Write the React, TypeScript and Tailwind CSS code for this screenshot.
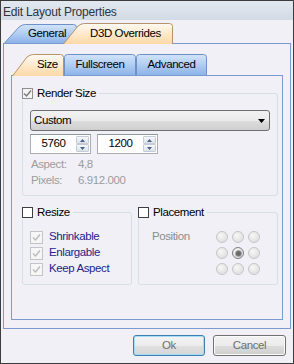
import React, { useId } from "react";

type TabProps = {
  label: string;
  w: number;
  h: number;
  selected?: boolean;
  slant?: boolean;
  className?: string;
  textClass?: string;
};

// Office-2007 style tab, shape drawn behind the label
const Tab = ({ label, w, h, selected, slant, className = "", textClass = "justify-center" }: TabProps) => {
  const id = useId();
  const s = 18;
  const d = slant
    ? `M0.5 ${h} L${s - 3} 3 Q${s} 0.5 ${s + 3.5} 0.5 H${w - 3.5} Q${w - 0.5} 0.5 ${w - 0.5} 3.5 V${h}`
    : `M0.5 ${h} V3.5 Q0.5 0.5 3.5 0.5 H${w - 3.5} Q${w - 0.5} 0.5 ${w - 0.5} 3.5 V${h}`;
  return (
    <div className={`relative shrink-0 flex items-center ${selected ? "z-20" : "z-10"} ${className}`}>
      <svg className="absolute inset-0" width={w} height={h}>
        <defs>
          <linearGradient id={id} x1="0" y1="0" x2="0" y2="1">
            {selected ? (
              <>
                <stop offset="0" stopColor="#fffaf3" />
                <stop offset="1" stopColor="#fdd8a6" />
              </>
            ) : (
              <>
                <stop offset="0" stopColor="#d3e4fa" />
                <stop offset="0.5" stopColor="#b0cdf2" />
                <stop offset="1" stopColor="#8db3ea" />
              </>
            )}
          </linearGradient>
        </defs>
        <path d={d + " Z"} fill={`url(#${id})`} stroke="none" />
        <path d={d} fill="none" stroke={selected ? "#b8926a" : "#6f91c7"} />
      </svg>
      <span className={`relative flex w-full pt-[1px] ${textClass}`}>{label}</span>
    </div>
  );
};

const Check = ({ checked, tone }: { checked?: boolean; tone: "dark" | "grey" | "off" }) => {
  const box =
    tone === "dark"
      ? "w-[11px] h-[11px] border-[#3f3f3f] bg-white"
      : tone === "grey"
      ? "w-[11px] h-[11px] border-[#8e8f8f] bg-[#f4f4f4]"
      : "w-[13px] h-[13px] border-[#c4c4c4] bg-[#f6f6f6]";
  const mark = tone === "grey" ? "#7d7d7d" : "#bdbdbd";
  return (
    <span className={`shrink-0 border flex items-center justify-center ${box}`}>
      {checked && (
        <svg width="9" height="9" viewBox="0 0 9 9">
          <path d="M1 4.5 L3.5 7 L8 1.5" fill="none" stroke={mark} strokeWidth="1.5" />
        </svg>
      )}
    </span>
  );
};

const SpinBtn = ({ up }: { up?: boolean }) => (
  <span className="w-[13px] h-[8px] border border-[#c5ccd6] rounded-[1px] bg-[linear-gradient(#f5f7fa,#dde3eb)] flex items-center justify-center">
    <svg width="5" height="3" viewBox="0 0 5 3">
      <path d={up ? "M0 3 L2.5 0 L5 3 Z" : "M0 0 L5 0 L2.5 3 Z"} fill="#4a5f8a" />
    </svg>
  </span>
);

const Spinner = ({ value }: { value: string }) => (
  <div className="w-[61px] h-[20px] bg-white border border-[#abadb3] border-t-[#8f939b] flex items-center">
    <span className="flex-1 text-center">{value}</span>
    <div className="flex flex-col mr-[1px]">
      <SpinBtn up />
      <SpinBtn />
    </div>
  </div>
);

const Radio = ({ on }: { on?: boolean }) => (
  <div className="w-[16px] h-[16px] flex items-center justify-center">
    <span
      className={`w-[12px] h-[12px] rounded-full border bg-[radial-gradient(circle_at_40%_35%,#f7f7f7,#d8d8d8)] flex items-center justify-center ${
        on ? "border-[#7e7e7e]" : "border-[#c6c6c6]"
      }`}
    >
      {on && <span className="w-[5px] h-[5px] rounded-full bg-[#6a6a6a] ring-1 ring-[#a8a8a8]" />}
    </span>
  </div>
);

const Legend = ({ label, checked, tone }: { label: string; checked?: boolean; tone: "dark" | "grey" }) => (
  <legend className="-ml-[8px] pr-[3px]">
    <span className="flex items-center h-[13px]">
      <Check checked={checked} tone={tone} />
      <span className="ml-[4px]">{label}</span>
    </span>
  </legend>
);

export default function App() {
  return (
    <div className="w-[294px] h-[364px] border border-[#3c3c3c] bg-[#f0f0f6] flex flex-col font-['Liberation_Sans',Arial,sans-serif] text-[11.5px] tracking-[-0.4px] text-black select-none">
      {/* title bar */}
      <div className="h-[19px] shrink-0 pl-[2px] flex items-center pt-[2px] text-[12px] tracking-[-0.2px] text-[#2e343c] bg-[linear-gradient(#e2e8ef,#d2dbe5)]">
        Edit Layout Properties
      </div>

      <div className="px-[2px] pt-[3px]">
        {/* outer tabs */}
        <div className="flex items-start h-[20px] pl-[1px]">
          <Tab label="General" w={73} h={19} slant className="w-[73px] h-[19px] mt-[1px]" textClass="pl-[24px]" />
          <Tab label="D3D Overrides" w={110} h={21} slant selected className="w-[110px] h-[21px] -ml-[14px]" textClass="pl-[27px] pb-[1px]" />
        </div>

        {/* outer panel */}
        <div className="h-[286px] border border-[#7b9bd0] pt-[10px] px-[7px] pb-[8px] flex flex-col">
          <div className="flex items-start h-[21px]">
            <Tab label="Size" w={52} h={22} slant selected className="w-[52px] h-[22px] ml-[1px]" textClass="pl-[25px] pb-[1px]" />
            <Tab label="Fullscreen" w={72} h={21} className="w-[72px] h-[21px]" />
            <Tab label="Advanced" w={71} h={21} className="w-[71px] h-[21px]" />
          </div>

          {/* inner panel */}
          <div className="h-[245px] border border-[#7b9bd0] pt-[11px] pl-[10px] pr-[4px]">
            <fieldset className="border border-[#d5dfe5] rounded-[3px] px-[7px] pb-[6px]">
              <Legend label="Render Size" checked tone="grey" />
              <div className="mt-[10px] h-[21px] rounded-[3px] border border-[#707070] bg-[linear-gradient(#f2f2f2_0%,#ebebeb_50%,#dddddd_51%,#cfcfcf_100%)] flex items-center justify-between pl-[3px] pr-[4px]">
                <span>Custom</span>
                <svg width="7" height="4" viewBox="0 0 7 4">
                  <path d="M0 0 H7 L3.5 4 Z" fill="#000" />
                </svg>
              </div>
              <div className="mt-[3px] flex gap-[6px]">
                <Spinner value="5760" />
                <Spinner value="1200" />
              </div>
              <div className="mt-[3px] ml-[1px] text-[#9d9d9d]">
                <div className="h-[16px] flex items-center">
                  <span className="w-[47px]">Aspect:</span>
                  <span>4,8</span>
                </div>
                <div className="h-[16px] flex items-center">
                  <span className="w-[47px]">Pixels:</span>
                  <span>6.912.000</span>
                </div>
              </div>
            </fieldset>

            <div className="mt-[10px] flex gap-[6px]">
              <fieldset className="w-[110px] border border-[#d5dfe5] rounded-[3px] px-[7px] pb-[7px]">
                <Legend label="Resize" tone="dark" />
                <div className="mt-[10px] text-[#23238a]">
                  {["Shrinkable", "Enlargable", "Keep Aspect"].map((t) => (
                    <div key={t} className="h-[16px] flex items-center">
                      <Check checked tone="off" />
                      <span className="ml-[6px]">{t}</span>
                    </div>
                  ))}
                </div>
              </fieldset>

              <fieldset className="w-[140px] border border-[#d5dfe5] rounded-[3px] px-[7px] pb-[7px]">
                <Legend label="Placement" tone="dark" />
                <div className="mt-[10px] flex">
                  <span className="ml-[6px] w-[62px] h-[16px] flex items-center text-[#8c8c8c]">Position</span>
                  <div className="grid grid-cols-3">
                    {[0, 1, 2, 3, 4, 5, 6, 7, 8].map((i) => (
                      <Radio key={i} on={i === 4} />
                    ))}
                  </div>
                </div>
              </fieldset>
            </div>
          </div>
        </div>
      </div>

      {/* buttons */}
      <div className="mt-[6px] flex justify-end gap-[8px] pr-[7px] text-[#6e6e6e]">
        <button className="w-[72px] h-[21px] rounded-[3px] border border-[#3c7fb1] shadow-[inset_0_0_0_1px_#a6dcf6] bg-[linear-gradient(#f4f4f4_0%,#ececec_50%,#e0e0e0_51%,#d6d6d6_100%)]">
          Ok
        </button>
        <button className="w-[73px] h-[21px] rounded-[3px] border border-[#707070] shadow-[inset_0_0_0_1px_#fbfbfb] bg-[linear-gradient(#f2f2f2_0%,#ebebeb_50%,#dddddd_51%,#cfcfcf_100%)]">
          Cancel
        </button>
      </div>
    </div>
  );
}
